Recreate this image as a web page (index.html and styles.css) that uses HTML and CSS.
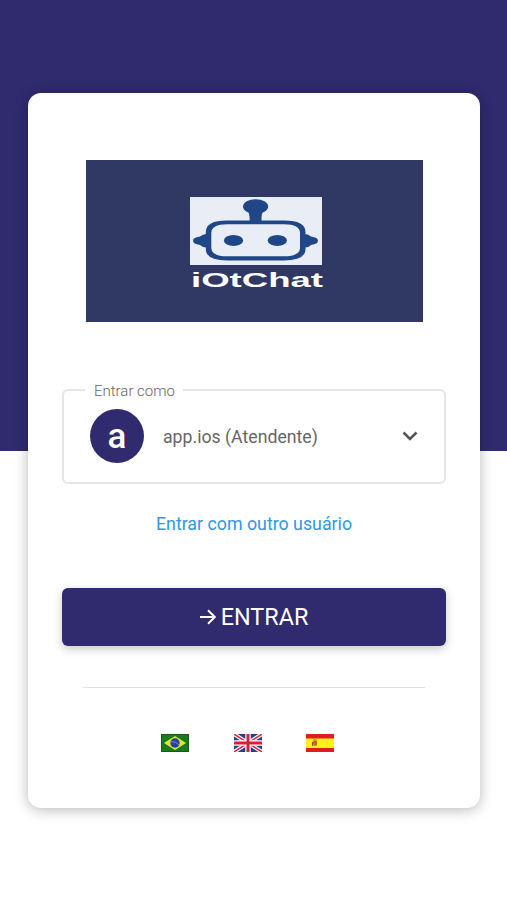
FILE: index.html
```html
<!DOCTYPE html>
<html lang="pt-BR">
<head>
  <meta charset="UTF-8"/>
  <meta name="viewport" content="width=device-width, initial-scale=1.0"/>
  <title>iOtChat</title>
  <link rel="stylesheet" href="styles.css">
</head>
<body>
  <main class="card">
    <!-- Logo -->
    <div class="logo">
      <svg class="robot" width="132" height="68" viewBox="0 0 132 68">
        <g fill="#1f4788">
          <ellipse cx="65.6" cy="9.6" rx="12.6" ry="7.4"/>
          <path d="M57 13h17q-3 3-2.4 12H59.6Q60 16 57 13z"/>
          <path d="M18 37Q13 36.5 10 39.5Q3 40.5 3 43.8T10 48Q13 51 18 50.5z"/>
          <path d="M113.5 37Q118.5 36.5 121 39.5Q128 40.5 128 43.8T121 48Q118.5 51 113.5 50.5z"/>
          <path d="M37 23.5H94Q115.5 23.5 115.5 35V52Q115.5 63.4 94 63.4H37Q15.8 63.4 15.8 52V35Q15.8 23.5 37 23.5z"/>
        </g>
        <path d="M37 27.3H94Q110 27.3 110 36V51Q110 59.3 94 59.3H37Q21.3 59.3 21.3 51V36Q21.3 27.3 37 27.3z" fill="#e9eef6"/>
        <ellipse cx="43.5" cy="43.4" rx="9.6" ry="5.5" fill="#1f4788"/>
        <ellipse cx="87.3" cy="43.4" rx="9.6" ry="5.5" fill="#1f4788"/>
      </svg>
      <svg class="brand" width="132" height="24" viewBox="0 0 132 24">
        <text x="1" y="21.5" textLength="132" lengthAdjust="spacingAndGlyphs">iOtChat</text>
      </svg>
    </div>

    <!-- User selection -->
    <fieldset class="user-select">
      <legend>Entrar como</legend>
      <div class="user">
        <span class="avatar">a</span>
        <span class="user-name">app.ios (Atendente)</span>
        <svg class="chevron" width="16" height="10" viewBox="0 0 16 10">
          <path d="M1.5 1.5L8 8L14.5 1.5" fill="none" stroke="#555" stroke-width="2.6"/>
        </svg>
      </div>
    </fieldset>

    <a class="other-user" href="#">Entrar com outro usuário</a>

    <button class="enter" type="button">
      <svg width="16" height="16" viewBox="0 0 16 16">
        <path d="M0 8H14.5M8 1.2L14.8 8L8 14.8" fill="none" stroke="#fff" stroke-width="2"/>
      </svg>
      <span>ENTRAR</span>
    </button>

    <hr class="divider">

    <!-- Languages -->
    <div class="flags">
      <svg width="28" height="18" viewBox="0 0 28 18">
        <rect width="28" height="18" fill="#187b1c"/>
        <path d="M3 9L14 2L25 9L14 16z" fill="#e8e337"/>
        <circle cx="14" cy="9" r="4.7" fill="#20439d"/>
        <path d="M9.8 7.7Q14.5 7 18 10.8" fill="none" stroke="#6f93cc" stroke-width="1"/>
        <rect x=".5" y=".5" width="27" height="17" fill="none" stroke="#125d14"/>
      </svg>
      <svg width="28" height="18" viewBox="0 0 28 18">
        <rect width="28" height="18" fill="#293b8b"/>
        <path d="M0 0L28 18M28 0L0 18" stroke="#f4eef4" stroke-width="4"/>
        <path d="M0 0L28 18M28 0L0 18" stroke="#d62f46" stroke-width="1.5"/>
        <path d="M14 0V18M0 9H28" stroke="#fff" stroke-width="5.4"/>
        <path d="M14 0V18M0 9H28" stroke="#d51f37" stroke-width="3"/>
      </svg>
      <svg width="28" height="18" viewBox="0 0 28 18">
        <rect width="28" height="18" fill="#df1d1c"/>
        <rect y="4.5" width="28" height="9.5" fill="#fff11c"/>
        <path d="M7 7h4v4q-2 2-4 0z" fill="#cf6a25"/>
        <path d="M7.5 6h3M6.5 8v4M9 8h2" stroke="#a94b20" stroke-width="1"/>
      </svg>
    </div>
  </main>
</body>
</html>
```

FILE: styles.css
```css
:root {
  --primary: #302a6f;
  --logo-bg: #303864;
  --link: #2e98e6;
  --border: #e6e6e6;
}
* { box-sizing: border-box; margin: 0; padding: 0; }
body {
  min-height: 900px;
  padding: 93px 27px 0 28px;
  font-family: Roboto, "Liberation Sans", sans-serif;
  background: linear-gradient(var(--primary) 451px, #fff 451px);
}
svg { display: block; }

.card {
  height: 715px;
  padding: 67px 34px 0;
  display: flex;
  flex-direction: column;
  background: #fff;
  border-radius: 13px;
  box-shadow: 0 2px 14px rgba(0,0,0,0.28);
}
.logo {
  width: 337px;
  height: 162px;
  padding-top: 37px;
  margin: 0 auto;
  display: flex;
  flex-direction: column;
  align-items: center;
  background: var(--logo-bg);
}
.robot {
  margin-left: 3px;
  background: #e9eef6;
}
.brand { margin-left: 3px; overflow: visible; }
.brand text {
  font-family: "Liberation Sans", Arial, sans-serif;
  font-size: 20px;
  font-weight: bold;
  fill: #fff;
}

.user-select {
  height: 103px;
  margin-top: 59px;
  padding: 0 26px 0 21px;
  border: 2px solid var(--border);
  border-radius: 6px;
}
.user-select legend {
  height: 18px;
  padding: 0 8px 0 9px;
  line-height: 20px;
  font-size: 15px;
  color: #666;
  font-weight: 300;
}
.user {
  display: flex;
  align-items: center;
  margin: 10px 0 0 5px;
}
.avatar {
  width: 54px;
  height: 54px;
  border-radius: 50%;
  background: var(--primary);
  color: #fff;
  font-size: 35px;
  font-weight: 500;
  line-height: 55px;
  text-align: center;
}
.user-name {
  margin-left: 19px;
  padding-top: 2px;
  font-size: 17.7px;
  color: #666;
}
.chevron { margin-left: auto; }

.other-user {
  margin-top: 29px;
  line-height: 22px;
  font-size: 17.8px;
  color: var(--link);
  text-align: center;
  text-decoration: none;
}
.enter {
  height: 58px;
  margin-top: 53px;
  display: flex;
  align-items: center;
  justify-content: center;
  gap: 5px;
  border: none;
  border-radius: 6px;
  background: var(--primary);
  color: #fff;
  font-family: inherit;
  font-size: 23.4px;
  box-shadow: 0 3px 10px rgba(0,0,0,0.22);
}
.divider {
  margin: 41px 21px 0;
  border: none;
  border-top: 1px solid #e0e0e0;
}
.flags {
  margin: 46px 0 0 99px;
  display: flex;
  gap: 44.5px;
}
```
